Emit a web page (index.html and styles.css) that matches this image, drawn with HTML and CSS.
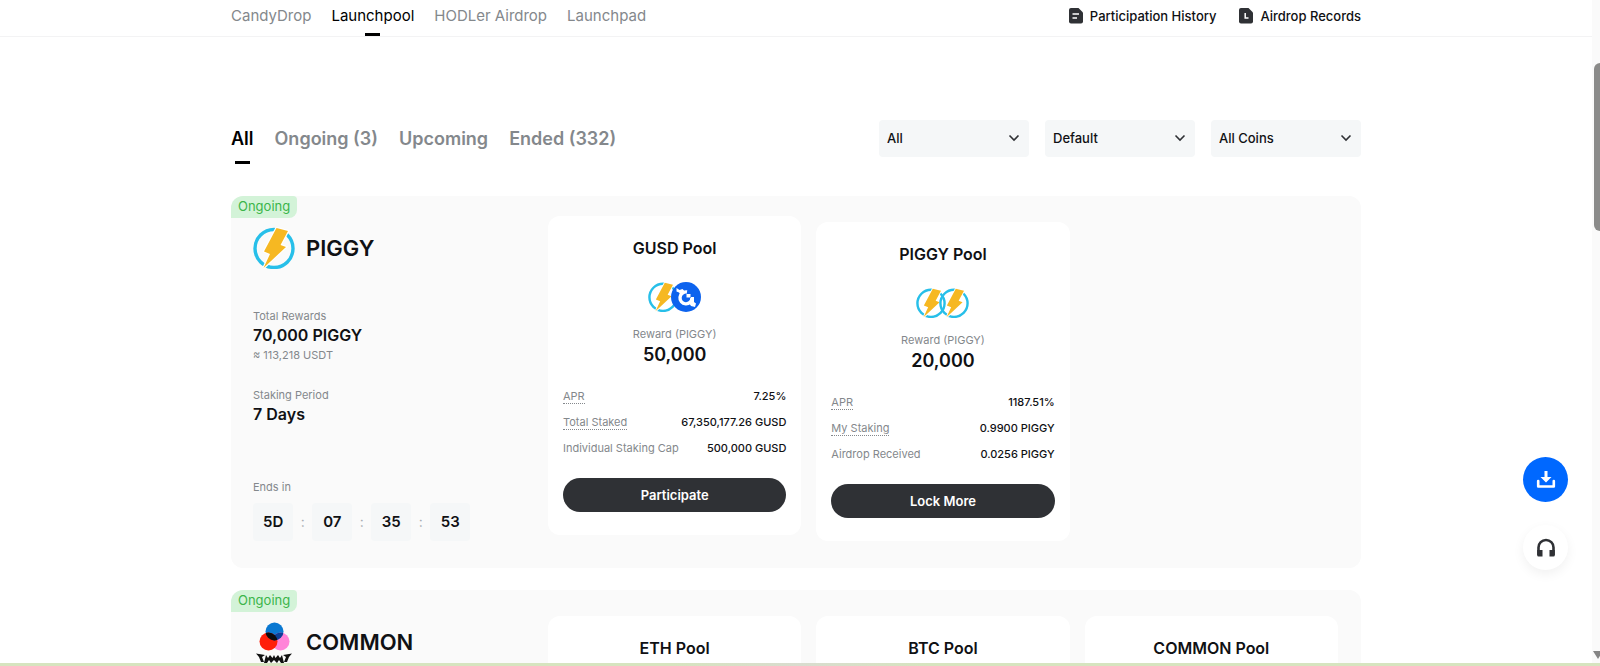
FILE: index.html
```html
<!DOCTYPE html>
<html lang="en">
<head>
  <meta charset="UTF-8">
  <meta name="viewport" content="width=device-width, initial-scale=1.0">
  <title>Launchpool</title>
  <link rel="stylesheet" href="styles.css">
</head>
<body>
  <!-- Shared logos -->
  <svg class="defs" width="0" height="0" aria-hidden="true">
    <symbol id="piggy" viewBox="0 0 42 42">
      <circle cx="21" cy="21.500" r="19" fill="none" stroke="#27bfe9" stroke-width="3.4"/>
      <path d="M23.500 1 L35 4 L27.500 18 L33 20 L10.500 41 L17 27 L11 24.500 Z" fill="#f6b822" stroke="#fff" stroke-width="2.4"/>
      <path d="M23.500 1 L35 4 L27.500 18 L33 20 L10.500 41 L17 27 L11 24.500 Z" fill="#f6b822"/>
    </symbol>
    <symbol id="gusd" viewBox="0 0 30 30">
      <circle cx="15" cy="15" r="15" fill="#0d63ee"/>
      <path d="M16 10 A6 6 0 1 0 21 16" fill="none" stroke="#fff" stroke-width="3.400"/>
      <path d="M5.500 6 l3 2 l3 -1 l3.500 3.500 l-5 3 l-2 -3 l-2.500 -1 Z M20 15 h3 v5 l2 1.500 l-1 3.500 l-4 -1 l-2 -3 Z" fill="#fff"/>
      <path d="M15.500 12 h4 v3.500 h-4 Z" fill="#fff"/>
    </symbol>
  </svg>

  <div class="page">
    <!-- Top navigation -->
    <header class="topbar">
      <div class="container topbar-row">
        <nav class="nav">
          <a href="#">CandyDrop</a>
          <a href="#" class="active">Launchpool</a>
          <a href="#">HODLer Airdrop</a>
          <a href="#">Launchpad</a>
        </nav>
        <div class="nav-links">
          <a href="#">
            <svg width="16" height="18" viewBox="0 0 16 18"><path d="M3 1 H10.500 L15 5.500 V14.500 A2 2 0 0 1 13 16.500 H3 A2 2 0 0 1 1 14.500 V3 A2 2 0 0 1 3 1 Z" fill="#2f3135"/><path d="M4.500 7 H11 M4.500 11 H9" stroke="#fff" stroke-width="1.500"/></svg>
            Participation History
          </a>
          <a href="#">
            <svg width="16" height="18" viewBox="0 0 16 18"><path d="M3 1 H10.500 L15 5.500 V14.500 A2 2 0 0 1 13 16.500 H3 A2 2 0 0 1 1 14.500 V3 A2 2 0 0 1 3 1 Z" fill="#2f3135"/><path d="M7.200 6 V11 H10.500" fill="none" stroke="#fff" stroke-width="1.500"/></svg>
            Airdrop Records
          </a>
        </div>
      </div>
    </header>

    <main class="container">
      <!-- Status tabs and filters -->
      <div class="toolbar">
        <div class="tabs">
          <button class="active">All</button>
          <button>Ongoing (3)</button>
          <button>Upcoming</button>
          <button>Ended (332)</button>
        </div>
        <div class="filters">
          <div class="select">
            <select aria-label="Type"><option>All</option></select>
            <svg width="12" height="8" viewBox="0 0 12 8"><path d="M1.500 1.500 L6 6 L10.500 1.500"/></svg>
          </div>
          <div class="select">
            <select aria-label="Sort"><option>Default</option></select>
            <svg width="12" height="8" viewBox="0 0 12 8"><path d="M1.500 1.500 L6 6 L10.500 1.500"/></svg>
          </div>
          <div class="select">
            <select aria-label="Coins"><option>All Coins</option></select>
            <svg width="12" height="8" viewBox="0 0 12 8"><path d="M1.500 1.500 L6 6 L10.500 1.500"/></svg>
          </div>
        </div>
      </div>

      <!-- PIGGY -->
      <section class="project">
        <span class="badge">Ongoing</span>
        <div class="info">
          <div class="coin">
            <svg width="42" height="42"><use href="#piggy"/></svg>
            <h2>PIGGY</h2>
          </div>
          <div class="stat rewards">
            <p class="label">Total Rewards</p>
            <p class="value">70,000 PIGGY</p>
            <p class="label">≈ 113,218 USDT</p>
          </div>
          <div class="stat period">
            <p class="label">Staking Period</p>
            <p class="value">7 Days</p>
          </div>
          <div class="stat">
            <p class="label">Ends in</p>
            <div class="countdown">
              <b>5D</b><i>:</i><b>07</b><i>:</i><b>35</b><i>:</i><b>53</b>
            </div>
          </div>
        </div>

        <article class="pool raised">
          <h3>GUSD Pool</h3>
          <div class="pair">
            <svg width="30" height="30"><use href="#piggy"/></svg>
            <svg width="30" height="30"><use href="#gusd"/></svg>
          </div>
          <p class="label">Reward (PIGGY)</p>
          <p class="amount">50,000</p>
          <dl>
            <div><dt><span class="hint">APR</span></dt><dd>7.25%</dd></div>
            <div><dt><span class="hint">Total Staked</span></dt><dd>67,350,177.26 GUSD</dd></div>
            <div><dt>Individual Staking Cap</dt><dd>500,000 GUSD</dd></div>
          </dl>
          <button class="action">Participate</button>
        </article>

        <article class="pool">
          <h3>PIGGY Pool</h3>
          <div class="pair">
            <svg width="30" height="30"><use href="#piggy"/></svg>
            <svg width="30" height="30"><use href="#piggy"/></svg>
          </div>
          <p class="label">Reward (PIGGY)</p>
          <p class="amount">20,000</p>
          <dl>
            <div><dt><span class="hint">APR</span></dt><dd>1187.51%</dd></div>
            <div><dt><span class="hint">My Staking</span></dt><dd>0.9900 PIGGY</dd></div>
            <div><dt>Airdrop Received</dt><dd>0.0256 PIGGY</dd></div>
          </dl>
          <button class="action">Lock More</button>
        </article>
      </section>

      <!-- COMMON -->
      <section class="project">
        <span class="badge">Ongoing</span>
        <div class="info">
          <div class="coin">
            <svg width="42" height="42" viewBox="0 0 42 42">
              <clipPath id="top-circle"><circle cx="21.500" cy="10.500" r="9"/></clipPath>
              <circle cx="21.500" cy="10.500" r="9" fill="#0a78d1"/>
              <circle cx="27.500" cy="20.500" r="9" fill="#ff84d8"/>
              <circle cx="15.500" cy="20.500" r="9" fill="#ff1f0a"/>
              <g clip-path="url(#top-circle)">
                <circle cx="27.500" cy="20.500" r="9" fill="#0b3f97"/>
                <circle cx="15.500" cy="20.500" r="9" fill="#0c0c10"/>
              </g>
              <!-- ornament under the circles -->
              <path d="M3 32.500 L12 34 L9 36 L11 41 H8 L6 36 Z M39 32.500 L30 34 L33 36 L31 41 H34 L36 36 Z M13 34 L15 37 L17 34 L19.500 37 L21 34 L22.500 37 L25 34 L27 37 L29 34 L31 42 H28 L26 39 L24 42 L21 39 L18 42 L16 39 L14 42 H11 Z" fill="#111"/>
            </svg>
            <h2>COMMON</h2>
          </div>
        </div>
        <article class="pool"><h3>ETH Pool</h3></article>
        <article class="pool"><h3>BTC Pool</h3></article>
        <article class="pool"><h3>COMMON Pool</h3></article>
      </section>
    </main>
  </div>

  <!-- Floating buttons -->
  <div class="floating">
    <button class="download" aria-label="Download">
      <svg width="20" height="20" viewBox="0 0 20 20"><path d="M8.500 1 h3 v6 h4 L10 12.500 L4.500 7 h4 Z" fill="#fff"/><path d="M2.200 11 V16.500 H17.800 V11" fill="none" stroke="#fff" stroke-width="2.600" stroke-linejoin="round" stroke-linecap="round"/></svg>
    </button>
    <button class="support" aria-label="Support">
      <svg width="20" height="20" viewBox="0 0 20 20"><path d="M2.500 17 V9.500 A7.500 7.500 0 0 1 17.500 9.500 V17" fill="none" stroke="#2f3135" stroke-width="2.600"/><path d="M1.200 12 h5.300 v6.500 h-4 a1.300 1.300 0 0 1 -1.300 -1.300 Z M18.800 12 h-5.300 v6.500 h4 a1.300 1.300 0 0 0 1.300 -1.300 Z" fill="#2f3135"/></svg>
    </button>
  </div>

  <div class="scrollbar"><div class="thumb"></div><div class="arrow"></div></div>
  <div class="strip"></div>
</body>
</html>
```
FILE: styles.css
```css
* {
  box-sizing: border-box;
}

body {
  margin: 0;
  height: 100vh;
  overflow: hidden;
  font-family: Inter, "Liberation Sans", sans-serif;
  font-size: 11px;
  color: #101114;
  background-color: #fff;
}

h2, h3, p, dl, dd {
  margin: 0;
}

a {
  color: inherit;
  text-decoration: none;
}

button {
  font-family: inherit;
  border: none;
  padding: 0;
  cursor: pointer;
}

svg {
  display: block;
}

.defs {
  position: absolute;
}

.page {
  height: 100vh;
  margin-right: 8px; /* room for the scrollbar */
  overflow: hidden;
}

.container {
  max-width: 1130px;
  margin: 0 auto;
}

/* Top navigation */
.topbar {
  border-bottom: 1px solid #f3f3f4;
}

.topbar-row {
  display: flex;
  justify-content: space-between;
  height: 36px;
}

.nav {
  display: flex;
  gap: 20px;
  font-size: 15px;
  line-height: 32px;
  color: #84888c;
}

.nav .active {
  color: #000;
}

.nav .active::after {
  content: "";
  display: block;
  width: 15px;
  height: 3px;
  margin: 1px auto 0;
  background-color: #000;
}

.nav-links {
  display: flex;
  gap: 22px;
  font-size: 13px;
  font-weight: 500;
  line-height: 32px;
}

.nav-links a {
  display: flex;
  align-items: center;
  gap: 6px;
  height: 32px;
}

/* Tabs and filters */
.toolbar {
  display: flex;
  justify-content: space-between;
  align-items: flex-start;
  padding-top: 83px;
  height: 159px;
}

.tabs {
  display: flex;
  align-items: flex-start;
  gap: 21px;
}

.tabs button {
  background: none;
  font-size: 18px;
  font-weight: 600;
  line-height: 37px;
  color: #84888c;
}

.tabs .active {
  color: #000;
}

.tabs .active::after {
  content: "";
  display: block;
  width: 15px;
  height: 3px;
  margin: 4px auto 0;
  background-color: #000;
}

.filters {
  display: flex;
  gap: 16px;
}

.select {
  position: relative;
}

.select select {
  appearance: none;
  width: 150px;
  height: 37px;
  padding: 0 8px 2px;
  border: none;
  border-radius: 4px;
  background-color: #f5f7f8;
  font-family: inherit;
  font-size: 13px;
  font-weight: 500;
  color: #101114;
}

.select svg {
  position: absolute;
  right: 9px;
  top: 14px;
  fill: none;
  stroke: #2f3135;
  stroke-width: 1.6;
  pointer-events: none;
}

/* Project card */
.project {
  position: relative;
  display: grid;
  grid-template-columns: 280px repeat(3, 1fr);
  gap: 15px;
  min-height: 372px;
  margin-bottom: 22px;
  padding: 26px 23px 27px 22px;
  border-radius: 12px;
  background-color: #fafafa;
}

.badge {
  position: absolute;
  left: 0;
  top: 0;
  padding: 0 7px 2px;
  border-radius: 12px 4px 8px 0;
  background-color: #d3f3d8;
  font-size: 13px;
  line-height: 20px;
  color: #3bb54a;
}

.coin {
  display: flex;
  align-items: center;
  gap: 11px;
  padding-top: 5px;
}

.coin h2 {
  font-size: 22px;
  font-weight: 600;
  line-height: 40px;
}

.label {
  line-height: 18px;
  color: #84888c;
}

.value {
  font-size: 16px;
  font-weight: 600;
  line-height: 21px;
}

.rewards {
  padding-top: 38px;
}

.period {
  padding: 22px 0 53px;
}

.countdown {
  display: flex;
  align-items: center;
  margin-top: 7px;
}

.countdown b {
  min-width: 40px;
  padding: 0 10px;
  border-radius: 4px;
  background-color: #f5f7f8;
  font-size: 15px;
  font-weight: 600;
  line-height: 38px;
  text-align: center;
}

.countdown i {
  width: 19px;
  font-style: normal;
  font-size: 14px;
  line-height: 34px;
  color: #a9adb1;
  text-align: center;
}

/* Pools */
.pool {
  padding: 20px 15px;
  border-radius: 12px;
  background-color: #fff;
  text-align: center;
}

.pool.raised {
  transform: translateY(-6px);
}

.pool h3 {
  font-size: 16px;
  font-weight: 600;
  line-height: 24px;
}

.pair {
  display: flex;
  justify-content: center;
  margin: 22px 0 13px;
}

.pair svg + svg {
  margin-left: -7px;
}

.amount {
  font-size: 18px;
  font-weight: 600;
  line-height: 24px;
}

.pool dl {
  margin: 16px 0 17px;
}

.pool dl div {
  display: flex;
  justify-content: space-between;
  line-height: 26px;
}

.pool dt {
  color: #84888c;
}

.hint {
  border-bottom: 1px dotted #84888c;
}

.pool dd {
  font-weight: 500;
}

.action {
  width: 100%;
  height: 34px;
  border-radius: 17px;
  background-color: #2f3135;
  font-size: 13px;
  font-weight: 600;
  color: #fff;
}

/* Floating buttons */
.floating {
  position: fixed;
  right: 32px;
  top: 457px;
  display: flex;
  flex-direction: column;
  align-items: center;
  gap: 23px;
}

.floating button {
  display: flex;
  align-items: center;
  justify-content: center;
  width: 45px;
  height: 45px;
  border-radius: 50%;
}

.floating .download {
  background-color: #0068ff;
}

.floating .support {
  background-color: #fff;
  box-shadow: 0 4px 12px rgba(0, 0, 0, 0.06);
}

/* Scrollbar */
.scrollbar {
  position: fixed;
  top: 0;
  right: 0;
  bottom: 0;
  width: 8px;
  background-color: #fafafa;
}

.thumb {
  height: 168px;
  margin: 63px 0 0 2px;
  border-radius: 6px 0 0 6px;
  background-color: #8b8b8a;
}

.arrow {
  position: absolute;
  bottom: 7px;
  left: 1px;
  border: 5px solid transparent;
  border-top: 8px solid #858585;
  border-bottom: none;
}

.strip {
  position: fixed;
  left: 0;
  right: 0;
  bottom: 0;
  height: 3px;
  background: linear-gradient(90deg, #d6e4bf 0%, #d6e4bf 42%, #d9dccf 50%, #d6e4bf 58%, #d6e4bf 100%);
}
```
